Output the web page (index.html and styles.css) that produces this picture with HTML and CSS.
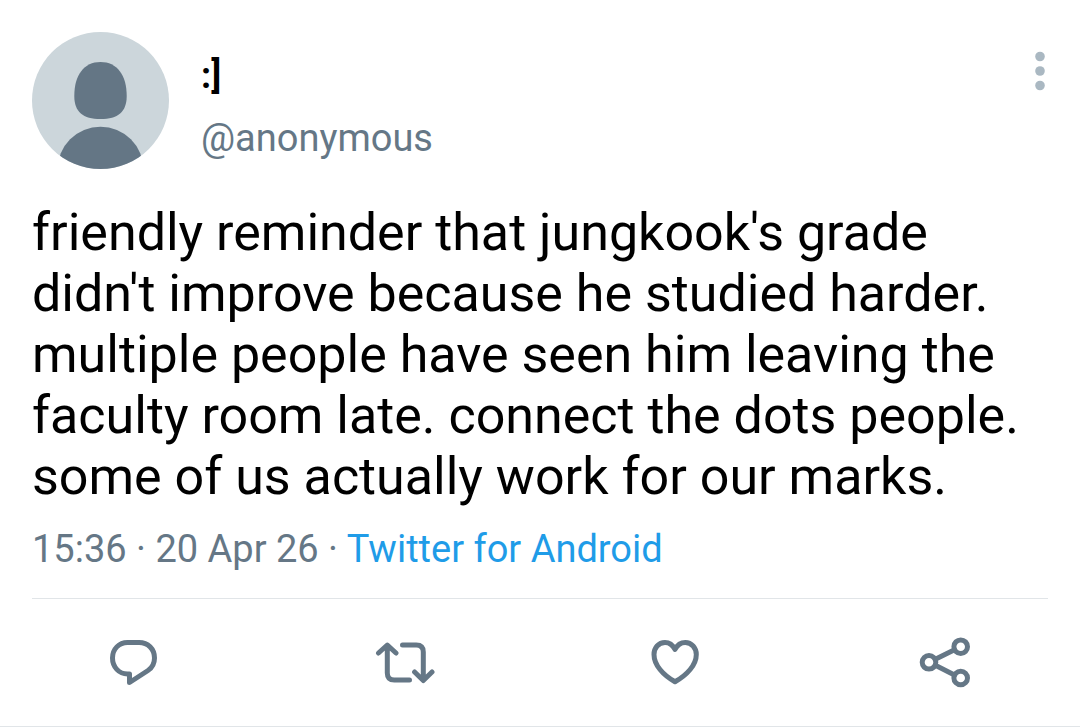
FILE: index.html
```
<!DOCTYPE html>
<html lang="en">
<head>
    <meta charset="utf-8">
    <meta name="viewport" content="width=device-width, initial-scale=1">
    <title>Tweet</title>
    <link rel="stylesheet" href="styles.css">
</head>
<body>
    <article class="tweet">
        <header class="top">
            <svg class="avatar" viewBox="0 0 137 137" aria-hidden="true">
                <clipPath id="round"><circle cx="68.5" cy="68.5" r="68.5"/></clipPath>
                <g clip-path="url(#round)">
                    <rect width="137" height="137" fill="#ccd6db"/>
                    <path d="M68.5 30C85 30 94.7 43 94.7 64C94.7 80 86 87 68.5 87C51 87 42.3 80 42.3 64C42.3 43 52 30 68.5 30Z" fill="#647685"/>
                    <circle cx="68.5" cy="137.7" r="43" fill="#647685"/>
                </g>
            </svg>
            <div class="user">
                <div class="name">:]</div>
                <div class="handle">@anonymous</div>
            </div>
            <button class="more" type="button" aria-label="More">
                <svg viewBox="0 0 16 40">
                    <circle cx="8" cy="5.5" r="4.8"/>
                    <circle cx="8" cy="20" r="4.8"/>
                    <circle cx="8" cy="34.5" r="4.8"/>
                </svg>
            </button>
        </header>
        <p class="text">friendly reminder that jungkook's grade didn't improve because he studied harder. multiple people have seen him leaving the faculty room late. connect the dots people. some of us actually work for our marks.</p>
        <div class="meta">15:36 · 20 Apr 26 · <a href="#">Twitter for Android</a></div>
        <div class="actions">
            <button type="button" aria-label="Reply">
                <svg viewBox="0 0 60 60"><path d="M24.5 41V49.5L43 37.5C47.5 34.5 49.5 30 49.5 25C49.5 16 43 9.5 34 9.5H22.5C14 9.5 7.5 16 7.5 25C7.5 34 14 41 22.5 41Z"/></svg>
            </button>
            <button type="button" aria-label="Retweet">
                <svg viewBox="0 0 60 60"><path d="M3.5 20L12.3 12L21 20M12.3 13V40Q12.3 47 19.3 47H34.5M27.5 12H41.3Q48.3 12 48.3 19V47M39.6 39L48.3 47.5L57 39"/></svg>
            </button>
            <button type="button" aria-label="Like">
                <svg viewBox="0 0 60 60"><path d="M30 16.5C27.5 11.5 23.5 9.5 20 9.5C13.5 9.5 9 14.8 9 21.5C9 32 18 42 30 48.8C42 42 51.3 32 51.3 21.5C51.3 14.8 46.5 9.5 40.3 9.5C36.5 9.5 32.5 11.5 30 16.5Z"/></svg>
            </button>
            <button type="button" aria-label="Share">
                <svg viewBox="0 0 60 60"><circle cx="14" cy="29.3" r="6.8"/><circle cx="45.7" cy="13.7" r="6.8"/><circle cx="45.7" cy="45" r="6.8"/><path d="M20.3 26.3L39.5 16.7M20.3 32.3L39.5 42"/></svg>
            </button>
        </div>
    </article>
</body>
</html>
```

FILE: styles.css
```
*{
    box-sizing: border-box;
    margin: 0;
    padding: 0;
}
body{
    background: #fff;
    color: #000;
    font-family: Roboto, "Liberation Sans", sans-serif;
}
button{
    border: 0;
    background: none;
    cursor: pointer;
}
svg{
    display: block;
}
.tweet{
    border-bottom: 1px solid #e1e5e8;
}
.top{
    display: flex;
    padding: 32px 32px 0;
}
.avatar{
    width: 137px;
    height: 137px;
}
.user{
    flex: 1;
    padding: 20px 0 0 32px;
}
.name{
    font-size: 36px;
    font-weight: 700;
    line-height: 48px;
}
.handle{
    margin-top: 14px;
    color: #657786;
    font-size: 38px;
    line-height: 48px;
}
.more{
    align-self: flex-start;
    padding-top: 19px;
}
.more svg{
    width: 16px;
    height: 40px;
    fill: #aab8c2;
}
.text{
    padding: 33px 32px 0;
    font-size: 52px;
    line-height: 61px;
}
.meta{
    margin: 0 32px;
    padding: 18px 0 25px;
    border-bottom: 1px solid #e1e5e8;
    color: #657786;
    font-size: 38px;
    line-height: 48px;
}
.meta a{
    color: #1f9ce8;
    text-decoration: none;
}
.actions{
    display: flex;
    padding: 34px 0 33px;
}
.actions button{
    flex: 1;
    display: flex;
    justify-content: center;
}
.actions svg{
    width: 60px;
    height: 60px;
    fill: none;
    stroke: #657786;
    stroke-width: 5;
    stroke-linecap: round;
    stroke-linejoin: round;
}
```
